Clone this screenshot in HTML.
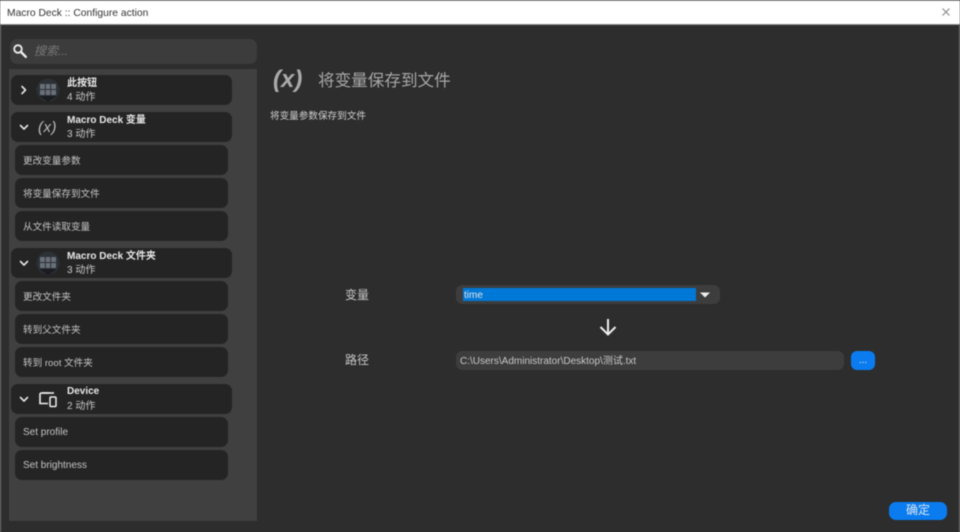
<!DOCTYPE html>
<html lang="zh"><head><meta charset="utf-8"><title>Macro Deck :: Configure action</title>
<style>
html,body{margin:0;padding:0;background:#2d2d2d}
body{width:960px;height:532px;position:relative;overflow:hidden;font-family:"Liberation Sans","Noto Sans CJK SC",sans-serif;color:#d8d8d8}
div,svg{position:absolute;box-sizing:border-box}
#all{left:0;top:0;width:960px;height:532px;filter:blur(.45px)}
.t{white-space:nowrap;line-height:14px}
.g{left:11px;width:221px;height:30px;background:#242424;border-radius:7px}
.i{left:15px;width:213px;height:30px;background:#242424;border-radius:7px;font-size:9.6px;line-height:33px;padding-left:8px;color:#c4c4c4;white-space:nowrap}
.h{left:67px;font-size:10px;font-weight:bold;color:#e8e8e8}
.s{left:67px;font-size:10px;color:#c8c8c8}
.w{fill:none;stroke:#e4e4e4;stroke-linecap:round;stroke-linejoin:round}
</style></head><body><div id="all">
<div style="left:0;top:0;width:960px;height:25px;background:#fff;border-top:1px solid #9a9a9a;border-bottom:1px solid #8e8e8e"></div>
<div class="t" style="left:7px;top:6px;font-size:10.3px;color:#333;line-height:15px">Macro Deck :: Configure action</div>
<svg style="left:941px;top:7px" width="10" height="10"><path d="M1.5 1.5L8.5 8.5M8.5 1.5L1.5 8.5" stroke="#888" stroke-width="1.1" fill="none"/></svg>
<div style="left:0;top:25px;width:1px;height:507px;background:#777"></div>
<div style="left:959px;top:25px;width:1px;height:507px;background:#777"></div>

<div style="left:10px;top:39px;width:247px;height:25px;background:#3c3c3c;border-radius:7px"></div>
<svg style="left:12px;top:43px" width="16" height="16"><circle cx="6" cy="6" r="3.8" fill="none" stroke="#eee" stroke-width="1.8"/><path d="M9 9L13.8 13.8" stroke="#eee" stroke-width="2.4" stroke-linecap="round"/></svg>
<div class="t" style="left:34px;top:44px;font-size:12px;font-style:italic;color:#777">搜索...</div>

<div style="left:9px;top:69px;width:248px;height:452px;background:#404040"></div>

<div class="g" style="top:75px"></div>
<svg style="left:18px;top:84px" width="12" height="12"><path class="w" stroke-width="1.6" d="M4 2.5L7.5 6L4 9.5"/></svg>
<svg style="left:36px;top:78px" width="24" height="25"><circle cx="12" cy="12" r="11.5" fill="#2c3138"/><path d="M3 18L12 24L21 18Z" fill="#1a1c20"/><rect x="4" y="6" width="16" height="11" fill="#6a7078"/><path d="M4 11.5H20M9.3 6V17M14.7 6V17" stroke="#2c3138" stroke-width="1"/></svg>
<div class="t h" style="top:77px">此按钮</div><div class="t s" style="top:91px">4 动作</div>

<div class="g" style="top:112px"></div>
<svg style="left:18px;top:121px" width="12" height="12"><path class="w" stroke-width="1.6" d="M2.5 4.5L6 8L9.5 4.5"/></svg>
<div class="t" style="left:38px;top:119px;font-size:15px;line-height:17px;font-style:italic;color:#bdbdbd;letter-spacing:.5px">(x)</div>
<div class="t h" style="top:114px">Macro Deck 变量</div><div class="t s" style="top:128px">3 动作</div>
<div class="i" style="top:145px">更改变量参数</div>
<div class="i" style="top:178px">将变量保存到文件</div>
<div class="i" style="top:211px">从文件读取变量</div>

<div class="g" style="top:248px"></div>
<svg style="left:18px;top:257px" width="12" height="12"><path class="w" stroke-width="1.6" d="M2.5 4.5L6 8L9.5 4.5"/></svg>
<svg style="left:36px;top:251px" width="24" height="25"><circle cx="12" cy="12" r="11.5" fill="#2c3138"/><path d="M3 18L12 24L21 18Z" fill="#1a1c20"/><rect x="4" y="6" width="16" height="11" fill="#6a7078"/><path d="M4 11.5H20M9.3 6V17M14.7 6V17" stroke="#2c3138" stroke-width="1"/></svg>
<div class="t h" style="top:250px">Macro Deck 文件夹</div><div class="t s" style="top:264px">3 动作</div>
<div class="i" style="top:281px">更改文件夹</div>
<div class="i" style="top:314px">转到父文件夹</div>
<div class="i" style="top:347px">转到 root 文件夹</div>

<div class="g" style="top:384px"></div>
<svg style="left:18px;top:393px" width="12" height="12"><path class="w" stroke-width="1.6" d="M2.5 4.5L6 8L9.5 4.5"/></svg>
<svg style="left:38px;top:391px" width="20" height="17"><path d="M11 2H3.5Q2 2 2 3.5V12.5H10" fill="none" stroke="#eee" stroke-width="1.6"/><path d="M4 2H16" stroke="#eee" stroke-width="1.6"/><rect x="12" y="6" width="6" height="9.5" rx="1" fill="none" stroke="#eee" stroke-width="1.5"/></svg>
<div class="t h" style="top:385px">Device</div><div class="t s" style="top:400px">2 动作</div>
<div class="i" style="top:417px;line-height:31px;font-size:10px">Set profile</div>
<div class="i" style="top:450px;line-height:31px;font-size:10px">Set brightness</div>

<div class="t" style="left:273px;top:66px;font-size:24px;line-height:28px;font-style:italic;font-weight:bold;color:#aaa">(x)</div>
<div class="t" style="left:318px;top:71px;font-size:16.6px;line-height:20px;color:#a8a8a8">将变量保存到文件</div>
<div class="t" style="left:270px;top:110px;font-size:9.6px;color:#d0d0d0">将变量参数保存到文件</div>

<div class="t" style="left:345px;top:288px;font-size:12px;color:#c8c8c8">变量</div>
<div style="left:456px;top:285px;width:264px;height:19px;background:#3d3d3d;border-radius:6px"></div>
<div class="t" style="left:463px;top:288px;width:233px;height:13px;background:#0078d7;font-size:10px;line-height:15px;padding-left:1px;color:#e4e4e4">time</div>
<svg style="left:700px;top:292px" width="10" height="7"><path d="M0 .5H10L5 5.5Z" fill="#eee"/></svg>
<svg style="left:598px;top:317px" width="20" height="20"><path d="M10 2V17M2.5 10L10 17.5L17.5 10" fill="none" stroke="#eee" stroke-width="2"/></svg>

<div class="t" style="left:345px;top:353px;font-size:12px;color:#c8c8c8">路径</div>
<div class="t" style="left:456px;top:351px;width:388px;height:19px;background:#3d3d3d;border-radius:6px;font-size:10px;line-height:21px;padding-left:4px;color:#c8c8c8">C:\Users\Administrator\Desktop\测试.txt</div>
<div class="t" style="left:851px;top:351px;width:24px;height:19px;background:#0a7cf0;border-radius:6px;font-size:10px;line-height:19px;text-align:center;color:#e8e8e8">...</div>
<div class="t" style="left:889px;top:502px;width:58px;height:18px;background:#0a7cf0;border-radius:7px;font-size:12px;line-height:17px;text-align:center;color:#dce6f2">确定</div>
</div></body></html>
